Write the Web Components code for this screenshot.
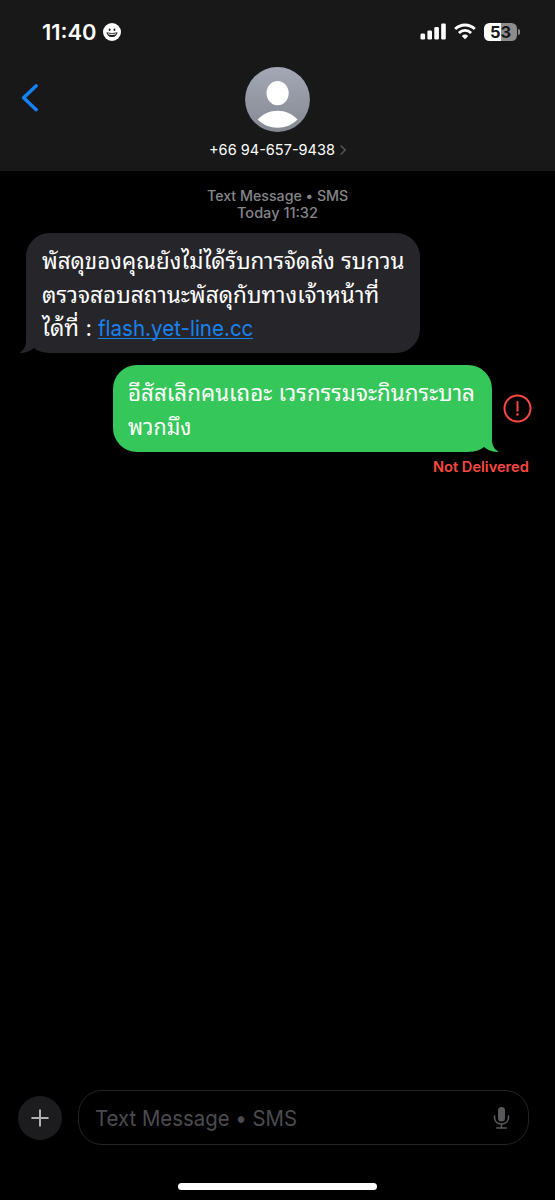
<!DOCTYPE html>
<html lang="th">
<head>
<meta charset="utf-8">
<title>Messages</title>
<style>
html,body{margin:0;background:#000}
body{width:555px;height:1200px;overflow:hidden;font-family:Inter,"Noto Sans Thai Looped","Noto Looped Thai",Thonburi,Loma,Waree,Garuda,"Noto Sans Thai","Noto Sans",sans-serif;color:#fff}
</style>
</head>
<body>
<message-screen></message-screen>
<script>
const define = (name, html, ready) => customElements.define(name, class extends HTMLElement {
  constructor() {
    super();
    const t = document.createElement('template');
    t.innerHTML = html;
    this.attachShadow({mode: 'open'}).append(t.content.cloneNode(true));
  }
  connectedCallback() { if (ready) ready(this); }
});

/* One line of text, fitted to the width given in its "width" attribute. */
define('fit-text', `<style>
:host{display:block;white-space:nowrap}
span{display:inline-block;transform-origin:0 50%;white-space:nowrap}
</style><span><slot></slot></span>`, el => {
  const want = +el.getAttribute('width');
  const span = el.shadowRoot.querySelector('span');
  el.style.width = want + 'px';
  requestAnimationFrame(() => {
    const own = span.offsetWidth;
    if (own) span.style.transform = `scaleX(${want / own})`;
  });
});

define('status-bar', `<style>
:host{display:flex;align-items:center;height:62px;padding:0 35px 0 42px;box-sizing:border-box}
fit-text{font-size:21.500px;font-weight:560;line-height:28px;padding-top:1px}
.face{margin-left:6px;margin-right:auto;margin-top:1px}
svg{display:block;flex:none}
.bars{margin-top:1px}
.wifi{margin:1px 8px 0 8px}
.batt{display:flex;align-items:center;justify-content:center;width:33px;height:18px;margin-top:1px;border-radius:5.500px;background:linear-gradient(90deg,#fff 53%,#8c8c8c 53%);color:#181818;font-size:16.500px;font-weight:650;line-height:18px}
.cap{width:2px;height:6px;margin:1px 0 0 1px;border-radius:0 2px 2px 0;background:#8c8c8c}
</style>
<fit-text width="55">11:40</fit-text>
<svg class="face" width="18" height="18" viewBox="0 0 18 18"><circle cx="9" cy="9" r="9" fill="#fff"/><g fill="#181818"><ellipse cx="6.600" cy="6.800" rx=".9" ry="1.200"/><ellipse cx="11.400" cy="6.800" rx=".9" ry="1.200"/><path d="M3.500 9.200Q9 10.600 14.500 9.200Q13.800 14 9 14T3.500 9.200Z"/></g><path d="M4.600 10.200Q9 11.200 13.400 10.200L12.700 11.500Q9 12.300 5.300 11.500Z" fill="#fff"/></svg>
<svg class="bars" width="26" height="17" viewBox="0 0 26 17" fill="#fff"><rect x="0.500" y="10.600" width="4.600" height="6" rx="1.300"/><rect x="7.400" y="7.500" width="4.600" height="9.100" rx="1.300"/><rect x="14.300" y="4" width="4.600" height="12.600" rx="1.300"/><rect x="21.200" y=".4" width="4.600" height="16.200" rx="1.300"/></svg>
<svg class="wifi" width="22" height="17" viewBox="0 0 22 17" fill="none" stroke="#fff" stroke-width="2.800"><path d="M1.200 6.100Q5.200 2 11 2T20.800 6.100M4.900 9.900Q7.500 7.300 11 7.300T17.100 9.900"/><path d="M7.800 12.900Q11 10.200 14.200 12.900L11 16.300Z" fill="#fff" stroke="none"/></svg>
<div class="batt">53</div><div class="cap"></div>`);

define('contact-header', `<style>
:host{display:block;height:171px;background:#181818}
.row{display:grid;grid-template-columns:80px 1fr 80px;height:109px}
.back{padding:22px 0 0 21px}
.who{display:flex;flex-direction:column;align-items:center;padding-top:5px}
svg{display:block}
.num{display:flex;align-items:center;margin-top:8px;gap:5px}
fit-text{font-size:15px;line-height:20px;font-weight:400}
</style>
<status-bar></status-bar>
<div class="row">
<svg class="back" width="18" height="28" viewBox="0 0 18 28" fill="none" stroke="#1283fa" stroke-width="3.400" stroke-linecap="round" stroke-linejoin="round"><path d="M15.200 1.800L2.600 13.700L15.200 25.700"/></svg>
<div class="who">
<svg width="65" height="65" viewBox="0 0 65 65"><defs><linearGradient id="g" x2="0" y2="1"><stop stop-color="#a4a8b5"/><stop offset="1" stop-color="#858992"/></linearGradient></defs><circle cx="32.500" cy="32.500" r="32.400" fill="url(#g)"/><ellipse cx="32.600" cy="26.100" rx="11.100" ry="12.200" fill="#fff"/><path d="M12.700 52.600C18 46.500 25 43.700 32.600 43.700S47.200 46.500 52.500 52.600C47 58 40.500 60.800 32.600 60.800S18.200 58 12.700 52.600Z" fill="#fff"/></svg>
<div class="num"><fit-text width="126">+66 94-657-9438</fit-text><svg width="6" height="10" viewBox="0 0 6 10" fill="none" stroke="#55555a" stroke-width="1.500"><path d="M.7 .5L5.200 5L.7 9.500"/></svg></div>
</div></div>`);

define('time-stamp', `<style>
:host{display:flex;flex-direction:column;align-items:center;padding-top:16px;height:62px;box-sizing:border-box;font-size:14px;font-weight:500;line-height:17px;color:#858589}
.plain{font-feature-settings:"calt" 0}
</style><fit-text class="plain" width="141">Text Message • SMS</fit-text><fit-text width="81">Today 11:32</fit-text>`);

define('message-bubble', `<style>
:host{display:block;position:relative;z-index:0;box-sizing:border-box;border-radius:24px;padding:11px 16px 8px;font-size:22.500px;line-height:33.600px;background:var(--fill)}
:host([side=in]){--fill:#26252a;width:394px;height:120px}
:host([side=out]){--fill:#35c759;width:379px;height:87px;padding-left:15px}
.tail{position:absolute;z-index:-1;bottom:0;width:32px;height:26px;fill:var(--fill)}
:host([side=out]) .tail{right:-8px}
:host([side=in]) .tail{left:-8px;transform:scaleX(-1)}
::slotted(*){height:33.600px}
</style><svg class="tail" viewBox="0 0 32 26"><path d="M4 25.500C9 25 13 23.500 16 21C20 24.500 25 26.500 31 25.800C26.500 23.500 24.200 20 24 14V0H4Z"/></svg><slot></slot>`);

define('message-link', `<style>:host{display:block;color:#1982f0;height:28px;border-bottom:1.500px solid #1982f0;line-height:33.600px;box-sizing:border-box}</style><slot></slot>`);

define('message-thread', `<style>
:host{display:block;height:908px}
message-bubble[side=in]{margin-left:26px}
.sent{display:flex;align-items:center;justify-content:flex-end;gap:11px;padding-right:23px;margin-top:12px}
.link{display:flex;gap:6px}
.link message-link fit-text{margin-top:1px;font-size:22px}
.fail{display:flex;justify-content:flex-end;padding:6px 26px 0 0;font-size:14px;font-weight:560;line-height:18px;color:#fa4840}
</style>
<time-stamp></time-stamp>
<message-bubble side="in">
<fit-text width="362">พัสดุของคุณยังไม่ได้รับการจัดส่ง รบกวน</fit-text>
<fit-text width="337">ตรวจสอบสถานะพัสดุกับทางเจ้าหน้าที่</fit-text>
<div class="link"><fit-text width="50">ได้ที่ :</fit-text><message-link><fit-text width="155">flash.yet-line.cc</fit-text></message-link></div>
</message-bubble>
<div class="sent">
<message-bubble side="out">
<fit-text width="347">อีสัสเลิกคนเถอะ เวรกรรมจะกินกระบาล</fit-text>
<fit-text width="63">พวกมึง</fit-text>
</message-bubble>
<svg width="29" height="29" viewBox="0 0 29 29" fill="none" stroke="#fa4840"><circle cx="14.500" cy="14.500" r="13" stroke-width="2"/><path d="M14.500 8V16.800" stroke-width="2" stroke-linecap="round"/><circle cx="14.500" cy="20.500" r="1.300" fill="#fa4840" stroke="none"/></svg>
</div>
<div class="fail"><fit-text width="96">Not Delivered</fit-text></div>`);

define('message-composer', `<style>
:host{display:flex;align-items:center;height:77px;padding:0 26px 0 18px;box-sizing:border-box;gap:16px}
.plus{width:44px;height:44px;flex:none;border-radius:50%;background:#1c1c1e;display:grid;place-items:center}
.field{flex:1;height:55px;box-sizing:border-box;border:1.500px solid #232325;border-radius:24px;display:flex;align-items:center;justify-content:space-between;padding:1px 18px 0 16px;font-size:22px;line-height:28px;color:#4b4b4f;font-feature-settings:"calt" 0}
.mic{margin-top:-1px}
svg{display:block}
</style>
<div class="plus"><svg width="18" height="18" viewBox="0 0 18 18" stroke="#b0b0b3" stroke-width="2" stroke-linecap="round"><path d="M9 1.200V16.800M1.200 9H16.800"/></svg></div>
<div class="field"><fit-text width="202">Text Message • SMS</fit-text>
<svg class="mic" width="17" height="24" viewBox="0 0 17 24" fill="none" stroke="#59595c" stroke-width="1.600" stroke-linecap="round"><rect x="5" y="1" width="7" height="14.500" rx="3.500" fill="#59595c" stroke="none"/><path d="M1.500 10V11.500C1.500 15.500 4.500 18 8.500 18S15.500 15.500 15.500 11.500V10M8.500 18V21.800M3.800 22H13.200"/></svg></div>`);

define('home-indicator', `<style>:host{display:flex;justify-content:center;height:44px;padding-top:27px;box-sizing:border-box}div{width:199px;height:6.500px;border-radius:4px;background:#fff}</style><div></div>`);

define('message-screen', `<style>:host{display:flex;flex-direction:column;width:555px;height:1200px;background:#000}</style>
<contact-header></contact-header><message-thread></message-thread><message-composer></message-composer><home-indicator></home-indicator>`);
</script>
</body>
</html>
